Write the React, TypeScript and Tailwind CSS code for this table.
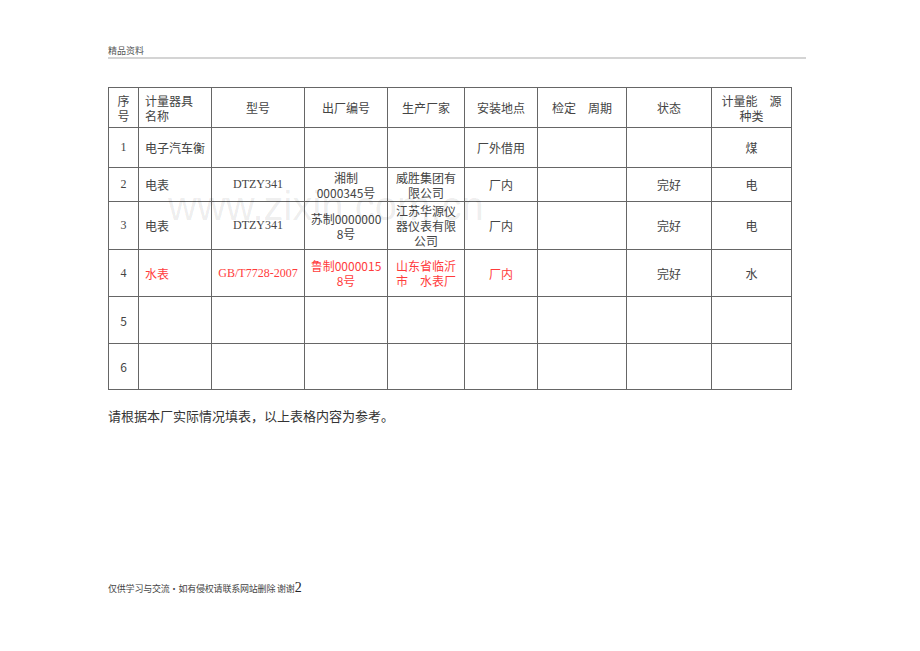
import React from "react"

const cjk = "font-['Noto_Sans_CJK_SC',sans-serif]"
const serif = "font-['Liberation_Serif','Noto_Sans_CJK_SC',serif]"

const cols = [30, 73, 93, 83, 77, 73, 89, 85, 80]

type Cell = { t?: React.ReactNode; red?: boolean; left?: boolean; serif?: boolean }

const heads: Cell[] = [
  { t: <>序<br />号</> },
  { t: <>计量器具<br />名称</>, left: true },
  { t: "型号" },
  { t: "出厂编号" },
  { t: "生产厂家" },
  { t: "安装地点" },
  { t: "检定　周期" },
  { t: "状态" },
  { t: <>计量能　源<br />种类</> },
]

const rows: { h: number; cells: Cell[] }[] = [
  {
    h: 40,
    cells: [{ t: "1", serif: true }, { t: "电子汽车衡", left: true }, {}, {}, {}, { t: "厂外借用" }, {}, {}, { t: "煤" }],
  },
  {
    h: 34,
    cells: [
      { t: "2", serif: true },
      { t: "电表", left: true },
      { t: "DTZY341", serif: true },
      { t: <>湘制<br />0000345号</> },
      { t: <>威胜集团有<br />限公司</> },
      { t: "厂内" },
      {},
      { t: "完好" },
      { t: "电" },
    ],
  },
  {
    h: 48,
    cells: [
      { t: "3", serif: true },
      { t: "电表", left: true },
      { t: "DTZY341", serif: true },
      { t: <>苏制0000000<br />8号</> },
      { t: <>江苏华源仪<br />器仪表有限<br />公司</> },
      { t: "厂内" },
      {},
      { t: "完好" },
      { t: "电" },
    ],
  },
  {
    h: 47,
    cells: [
      { t: "4", serif: true },
      { t: "水表", left: true, red: true },
      { t: "GB/T7728-2007", serif: true, red: true },
      { t: <>鲁制0000015<br />8号</>, red: true },
      { t: <>山东省临沂<br />市　水表厂</>, red: true },
      { t: "厂内", red: true },
      {},
      { t: "完好" },
      { t: "水" },
    ],
  },
  { h: 47, cells: [{ t: "5" }, {}, {}, {}, {}, {}, {}, {}, {}] },
  { h: 46, cells: [{ t: "6" }, {}, {}, {}, {}, {}, {}, {}, {}] },
]

function Td({ c, h }: { c: Cell; h: number }) {
  return (
    <td
      style={{ height: h }}
      className={`border border-[#666] p-0 text-[12px] leading-[15px] align-middle whitespace-nowrap ${c.left ? "text-left pl-[6px]" : "text-center"} ${c.red ? "text-[#ff3c3c]" : "text-[#444]"} ${c.serif ? serif : cjk}`}
    >
      {c.t}
    </td>
  )
}

export default function App() {
  return (
    <div className={`relative w-[920px] h-[651px] bg-white ${cjk}`}>
      <div className="pl-[108px] pr-[114px] pt-[45px]">
        <div className="text-[9px] leading-[11px] text-[#555] pb-[1px] border-b-2 border-[#d4d4d4]">精品资料</div>

        <table className="mt-[28px] border-collapse table-fixed w-[683px]">
          <colgroup>
            {cols.map((w, i) => (
              <col key={i} style={{ width: w }} />
            ))}
          </colgroup>
          <tbody>
            <tr>
              {heads.map((c, i) => (
                <Td key={i} c={c} h={40} />
              ))}
            </tr>
            {rows.map((r, i) => (
              <tr key={i}>
                {r.cells.map((c, j) => (
                  <Td key={j} c={c} h={r.h} />
                ))}
              </tr>
            ))}
          </tbody>
        </table>

        <div className="mt-[17px] text-[13px] leading-[18px] text-[#333]">请根据本厂实际情况填表，以上表格内容为参考。</div>

        <div className="mt-[156px] flex items-end text-[9px] leading-[12px] text-[#444] tracking-[-0.2px]">
          仅供学习与交流·如有侵权请联系网站删除 谢谢
          <span className={`${serif} text-[14px] leading-[14px] text-[#222]`}>2</span>
        </div>
      </div>

      <div className="absolute left-[168px] top-[184px] text-[40px] leading-[44px] text-[#000]/[0.08] font-['Liberation_Sans',sans-serif] pointer-events-none">
        www.zixin.com.cn
      </div>
    </div>
  )
}
